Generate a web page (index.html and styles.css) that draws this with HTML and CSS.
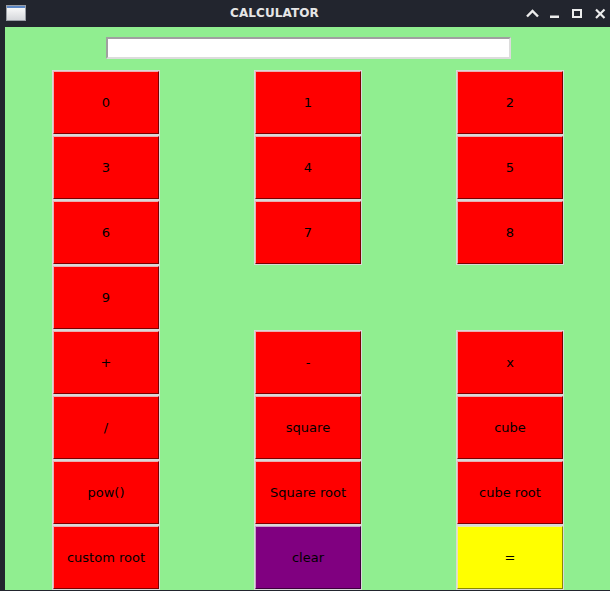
FILE: index.html
```html
<!DOCTYPE html>
<html>
<head>
<meta charset="utf-8">
<title>CALCULATOR</title>
<link rel="stylesheet" href="styles.css">
</head>
<body>
<div class="window">
  <div class="titlebar">
    <svg class="app-icon" width="20" height="16" viewBox="0 0 20 16">
      <defs>
        <linearGradient id="ig" x1="0" y1="0" x2="0" y2="1">
          <stop offset="0" stop-color="#ffffff"/>
          <stop offset="1" stop-color="#d4d6da"/>
        </linearGradient>
      </defs>
      <rect x="0.5" y="0.5" width="19" height="15" fill="url(#ig)" stroke="#9a9ea6"/>
      <rect x="1" y="1" width="18" height="2" fill="#5b86c4"/>
    </svg>
    <div class="title">CALCULATOR</div>
    <div class="controls">
      <svg width="87" height="27" viewBox="0 0 87 27">
        <polyline points="4,16.5 9.5,11 15,16.5" fill="none" stroke="#ececec" stroke-width="2.4"/>
        <rect x="27" y="15.5" width="9" height="2.5" fill="#ececec"/>
        <rect x="50" y="10" width="8" height="7" fill="none" stroke="#ececec" stroke-width="2"/>
        <line x1="73" y1="9.5" x2="81.5" y2="18" stroke="#ececec" stroke-width="2.2"/>
        <line x1="81.5" y1="9.5" x2="73" y2="18" stroke="#ececec" stroke-width="2.2"/>
      </svg>
    </div>
  </div>
  <div class="frame">
    <div class="entry-row">
      <input class="entry" type="text">
    </div>
    <div class="keys">
      <div class="key red"><span>0</span></div>
      <div class="key red"><span>1</span></div>
      <div class="key red"><span>2</span></div>
      <div class="key red"><span>3</span></div>
      <div class="key red"><span>4</span></div>
      <div class="key red"><span>5</span></div>
      <div class="key red"><span>6</span></div>
      <div class="key red"><span>7</span></div>
      <div class="key red"><span>8</span></div>
      <div class="key red"><span>9</span></div>
      <div class="empty"></div>
      <div class="empty"></div>
      <div class="key red"><span>+</span></div>
      <div class="key red"><span>-</span></div>
      <div class="key red"><span>x</span></div>
      <div class="key red"><span>/</span></div>
      <div class="key red"><span>square</span></div>
      <div class="key red"><span>cube</span></div>
      <div class="key red"><span>pow()</span></div>
      <div class="key red"><span>Square root</span></div>
      <div class="key red"><span>cube root</span></div>
      <div class="key red"><span>custom root</span></div>
      <div class="key purple"><span>clear</span></div>
      <div class="key yellow"><span>=</span></div>
    </div>
  </div>
</div>
</body>
</html>
```
FILE: styles.css
```css
html, body {
  margin: 0;
  padding: 0;
  background: #22252e;
}
.window {
  width: 610px;
  height: 591px;
  display: flex;
  flex-direction: column;
  background: #22252e;
  overflow: hidden;
}
.titlebar {
  height: 27px;
  flex: 0 0 27px;
  display: flex;
  align-items: flex-start;
}
.app-icon {
  margin-left: 6px;
  margin-top: 5px;
  flex: 0 0 20px;
}
.title {
  flex: 1;
  text-align: center;
  font-family: "DejaVu Sans", sans-serif;
  font-weight: bold;
  font-size: 12px;
  line-height: 27px;
  color: #e6e6e6;
  letter-spacing: 0.1px;
}
.controls {
  flex: 0 0 87px;
  height: 27px;
}
.controls svg {
  display: block;
}
.frame {
  margin-left: 5px;
  height: 563px;
  background: #90ee90;
  display: flex;
  flex-direction: column;
}
.entry-row {
  padding: 10px 0 0 101px;
  height: 22px;
}
.entry {
  display: block;
  box-sizing: border-box;
  width: 405px;
  height: 22px;
  margin: 0;
  padding: 0 3px;
  background: #ffffff;
  border-style: solid;
  border-width: 2px;
  border-color: #a0a0a0 #dcdcdc #dcdcdc #a0a0a0;
  outline: none;
  font-family: "DejaVu Sans", sans-serif;
  font-size: 13px;
}
.keys {
  margin-top: 11px;
  padding-left: 47px;
  display: grid;
  grid-template-columns: repeat(3, 108px);
  grid-auto-rows: 65px;
  column-gap: 94px;
}
.key {
  box-sizing: border-box;
  border: 1px solid #d9d9d9;
  display: flex;
}
.key span {
  flex: 1;
  display: flex;
  align-items: center;
  justify-content: center;
  border-style: solid;
  border-width: 1px;
  font-family: "DejaVu Sans", sans-serif;
  font-size: 13px;
  color: #000000;
}
.red span {
  background: #ff0000;
  border-color: #e8b0b0 #7a0000 #7a0000 #e8b0b0;
}
.purple span {
  background: #800080;
  border-color: #c8a0c8 #3c003c #3c003c #c8a0c8;
}
.yellow span {
  background: #ffff00;
  border-color: #e8e8b0 #8a8a00 #8a8a00 #e8e8b0;
}
```
